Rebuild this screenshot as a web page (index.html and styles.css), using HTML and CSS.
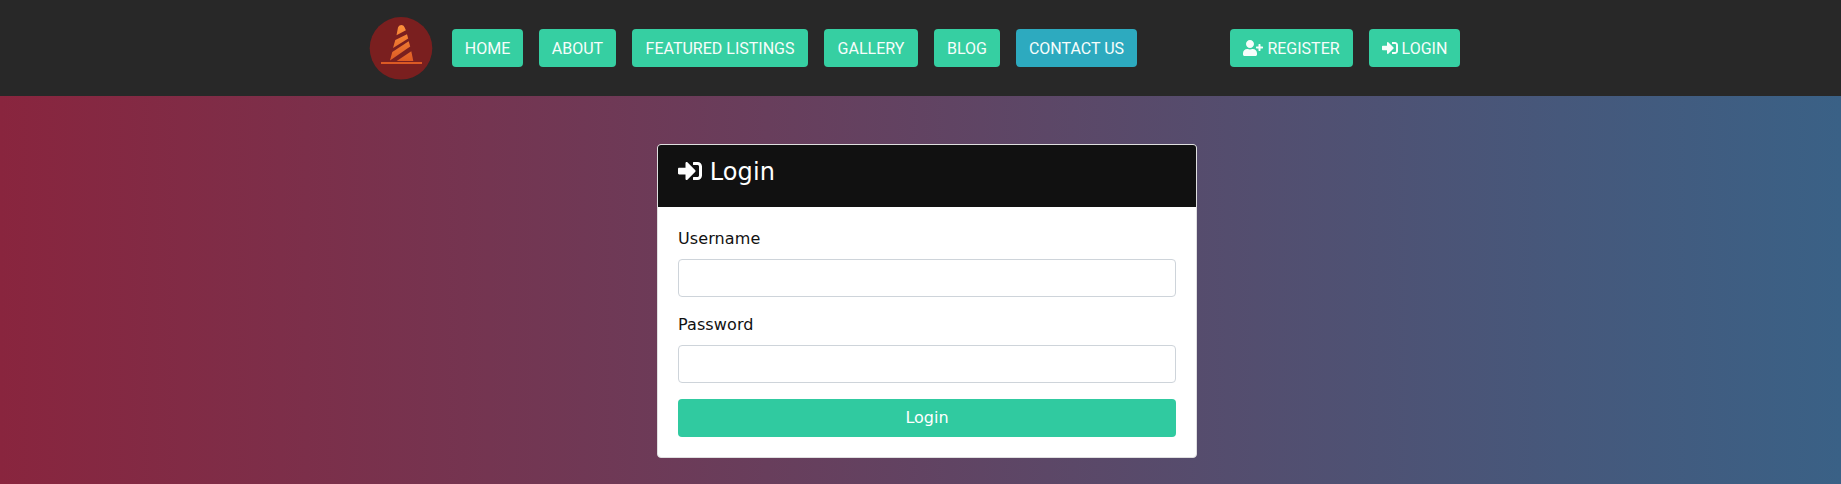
FILE: index.html
```html
<!DOCTYPE html>
<html lang="en">
<head>
<meta charset="utf-8">
<title>Login</title>
<link rel="stylesheet" href="styles.css">
</head>
<body>
<svg class="sprite" aria-hidden="true">
  <symbol id="sign-in" viewBox="0 0 512 512"><path d="M416 448h-84c-6.600 0-12-5.400-12-12v-40c0-6.600 5.400-12 12-12h84c17.700 0 32-14.300 32-32V160c0-17.700-14.300-32-32-32h-84c-6.600 0-12-5.400-12-12V76c0-6.600 5.400-12 12-12h84c53 0 96 43 96 96v192c0 53-43 96-96 96zm-47-209L201 71c-15-15-41-4.500-41 17v96H24c-13.300 0-24 10.700-24 24v96c0 13.300 10.700 24 24 24h136v96c0 21.500 26 32 41 17l168-168c9.300-9.400 9.300-24.600 0-34z"/></symbol>
  <symbol id="user-plus" viewBox="0 0 640 512"><path d="M624 208h-64v-64c0-8.800-7.200-16-16-16h-32c-8.800 0-16 7.200-16 16v64h-64c-8.800 0-16 7.200-16 16v32c0 8.800 7.200 16 16 16h64v64c0 8.800 7.200 16 16 16h32c8.800 0 16-7.200 16-16v-64h64c8.800 0 16-7.200 16-16v-32c0-8.800-7.200-16-16-16zm-400 48c70.700 0 128-57.300 128-128S294.700 0 224 0 96 57.300 96 128s57.300 128 128 128zm89.600 32h-16.700c-22.200 10.200-46.900 16-72.900 16s-50.600-5.800-72.900-16h-16.700C60.200 288 0 348.200 0 422.400V464c0 26.500 21.500 48 48 48h352c26.500 0 48-21.500 48-48v-41.600c0-74.200-60.200-134.400-134.400-134.400z"/></symbol>
</svg>
<header class="navbar">
  <a class="logo" href="#" aria-label="Home page">
    <svg width="64" height="64" viewBox="0 0 64 64">
      <defs>
        <linearGradient id="cone" gradientUnits="userSpaceOnUse" x1="0" y1="9" x2="0" y2="45"><stop offset="0" stop-color="#fd923c"/><stop offset="1" stop-color="#dc5a24"/></linearGradient>
      </defs>
      <circle cx="32" cy="32.300" r="31.300" fill="#7a1f1f"/>
      <g fill="url(#cone)">
        <path d="M27.500 19.200 29 11.500Q29.700 9 32.200 9T35.400 11L36.900 14.300Z"/>
        <path d="M26.300 24 38 18.200 39.200 22.500 24 32Z"/>
        <path d="M23.300 36 39.700 25.300 41.200 30.500 21 44.500Z"/>
        <path d="M27.700 45 42.300 35.300 44.300 45Z"/>
      </g>
      <path fill="#dc5a24" d="M12 46h41v2H12z"/>
    </svg>
  </a>
  <nav class="menu">
    <a class="btn" href="#">HOME</a>
    <a class="btn" href="#">ABOUT</a>
    <a class="btn" href="#">FEATURED LISTINGS</a>
    <a class="btn" href="#">GALLERY</a>
    <a class="btn" href="#">BLOG</a>
    <a class="btn btn-info" href="#">CONTACT US</a>
  </nav>
  <nav class="menu account">
    <a class="btn" href="#"><svg class="icon icon-wide"><use href="#user-plus"/></svg> REGISTER</a>
    <a class="btn" href="#"><svg class="icon"><use href="#sign-in"/></svg> LOGIN</a>
  </nav>
</header>
<main>
  <section class="card">
    <div class="card-header">
      <h4><svg class="icon"><use href="#sign-in"/></svg> Login</h4>
    </div>
    <form class="card-body">
      <label for="username">Username</label>
      <input id="username" type="text">
      <label for="password">Password</label>
      <input id="password" type="password">
      <button class="submit" type="button">Login</button>
    </form>
  </section>
</main>
</body>
</html>
```

FILE: styles.css
```css
* { box-sizing: border-box; }

body {
  margin: 0;
  min-height: 100vh;
  font: 16px/24px "DejaVu Sans", sans-serif;
  color: #111;
  background: linear-gradient(to right, #89253e, #3a6186);
}

.sprite { display: none; }

.icon {
  width: 1em;
  height: 1em;
  fill: currentColor;
  vertical-align: -0.125em;
}
.icon-wide { width: 1.25em; }

.navbar {
  display: flex;
  align-items: center;
  height: 96px;
  padding-left: 369px;
  background: #282828;
}
.logo { display: flex; margin-right: 19px; }

.menu {
  display: grid;
  grid-template-columns: 71px 77px 176px 94px 66px 121px;
  gap: 16px;
}
.account {
  grid-template-columns: 123px 91px;
  margin-left: 93px;
}

.btn {
  padding: 8px 0 6px;
  border-radius: 4px;
  font-family: Roboto, sans-serif;
  color: #f7fdfb;
  text-align: center;
  white-space: nowrap;
  text-decoration: none;
  background: #36cfa2;
}
.btn-info { background: #2daabf; }

main { padding-top: 48px; }

.card {
  width: 540px;
  margin-left: 657px;
  border: 1px solid #dfdfdf;
  border-radius: 4px;
  background: #fff;
}
.card-header {
  height: 62px;
  padding: 13px 20px 11px;
  border-radius: 3px 3px 0 0;
  color: #fff;
  background: #111;
}
h4 {
  margin: 0;
  font-size: 24px;
  font-weight: 400;
  line-height: 28.8px;
  letter-spacing: 0.1px;
}
.card-body {
  display: flex;
  flex-direction: column;
  padding: 20px;
}
label { margin-bottom: 8px; letter-spacing: 0.1px; }
input {
  height: 38px;
  margin: 0 0 16px;
  padding: 6px 12px;
  border: 1px solid #ced4da;
  border-radius: 4px;
  font: inherit;
  background: #fff;
}
.submit {
  height: 38px;
  padding: 6px 12px;
  border: 0;
  border-radius: 4px;
  font: inherit;
  color: #fff;
  background: #30caa0;
}
```
